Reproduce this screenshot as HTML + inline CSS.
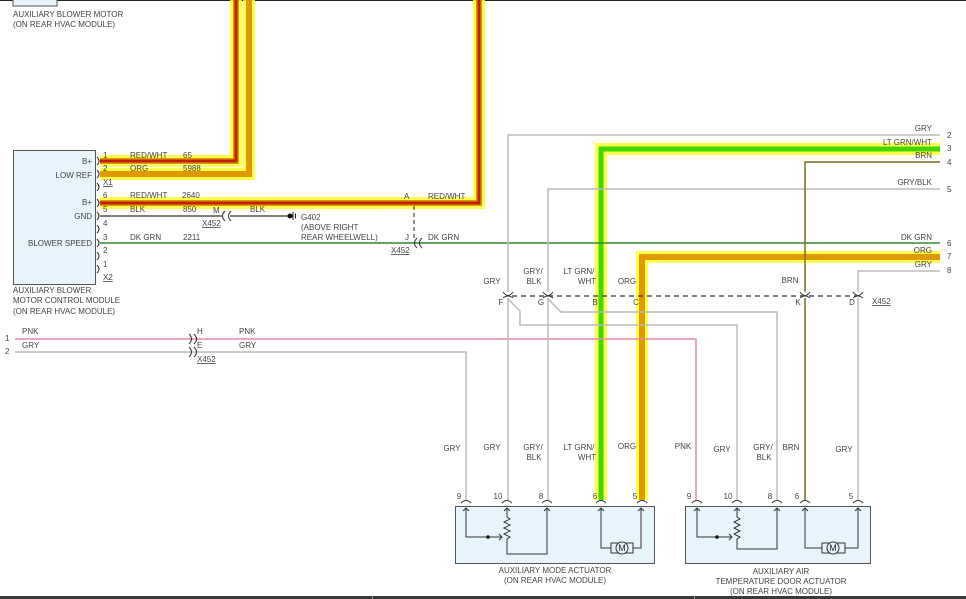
<!DOCTYPE html>
<html><head><meta charset="utf-8"><style>
html,body{margin:0;padding:0;background:#fff;}
svg{display:block;font-family:"Liberation Sans",sans-serif;}
text{font-size:8px;fill:#444;}
</style></head><body>
<svg width="966" height="599" viewBox="0 0 966 599" xmlns="http://www.w3.org/2000/svg">
<rect width="966" height="599" fill="#fff"/>
<line x1="0" y1="0.5" x2="966" y2="0.5" stroke="#222" stroke-width="1"/>
<rect x="13" y="-2" width="44" height="8" fill="#e8f4fc" stroke="#555"/>
<text x="13" y="17">AUXILIARY BLOWER MOTOR</text>
<text x="13" y="27">(ON REAR HVAC MODULE)</text>

<g fill="none" stroke-linejoin="miter">
<g stroke="#ffff30" stroke-width="12" opacity="0.85">
<polyline points="100,161 236,161 236,0"/>
<polyline points="100,174 249,174 249,0"/>
<polyline points="100,203 479,203 479,0"/>
<polyline points="940,149 601,149 601,500"/>
<polyline points="940,257 642,257 642,500"/>
</g>
<g stroke="#e09a00" stroke-width="6">
<polyline points="100,161 236,161 236,0"/>
<polyline points="100,174 249,174 249,0"/>
<polyline points="100,203 479,203 479,0"/>
<polyline points="940,257 642,257 642,500"/>
</g>
<g stroke="#c02010" stroke-width="3">
<polyline points="100,161 236,161 236,0"/>
<polyline points="100,203 479,203 479,0"/>
</g>
<polyline points="940,149 601,149 601,500" stroke="#40d800" stroke-width="5"/>
<polyline points="100,216 222,216" stroke="#555" stroke-width="1.5"/>
<polyline points="230,216 288,216" stroke="#555" stroke-width="1.5"/>
<polyline points="100,243 940,243" stroke="#2e8b2e" stroke-width="1.5"/>
<line x1="414" y1="206" x2="414" y2="240" stroke="#222" stroke-dasharray="4,3"/>
<polyline points="15,339 696,339 696,500" stroke="#e88aa0" stroke-width="1.5"/>
<polyline points="15,352 466,352 466,500" stroke="#bbb" stroke-width="1.5"/>
<polyline points="940,135 508,135 508,500" stroke="#bbb" stroke-width="1.5"/>
<polyline points="940,189 548,189 548,500" stroke="#bbb" stroke-width="1.5"/>
<polyline points="940,271 858,271 858,500" stroke="#bbb" stroke-width="1.5"/>
<polyline points="940,162 805,162 805,500" stroke="#7a6a20" stroke-width="1.5"/>
<polyline points="508,299 520,311 520,325 737,325 737,500" stroke="#bbb" stroke-width="1.5"/>
<polyline points="548,299 561,312 777,312 777,500" stroke="#bbb" stroke-width="1.5"/>
<line x1="512" y1="296" x2="862" y2="296" stroke="#333" stroke-dasharray="5,4" stroke-width="1.2"/>
</g>
<g fill="#fff" stroke="#333" stroke-width="1">
<path d="M503,292 q5,7 10,0 M503,298 q5,-4 10,0"/>
<path d="M543,292 q5,7 10,0 M543,298 q5,-4 10,0"/>
<path d="M800,292 q5,7 10,0 M800,298 q5,-4 10,0"/>
<path d="M853,292 q5,7 10,0 M853,298 q5,-4 10,0"/>
</g>
<g fill="none" stroke="#333" stroke-width="1">
<path d="M225,211 q-5,5 0,10 M231,211 q-5,5 0,10"/>
<path d="M189,334 q5,5 0,10 M194,334 q5,5 0,10 M189,347 q5,5 0,10 M194,347 q5,5 0,10"/>
<path d="M417,238 q-5,5 0,10 M422,238 q-5,5 0,10"/>
<path d="M97,157 q4,4 0,8 M97,170 q4,4 0,8 M97,183 q4,4 0,8 M97,199 q4,4 0,8 M97,212 q4,4 0,8 M97,225 q4,4 0,8 M97,239 q4,4 0,8 M97,252 q4,4 0,8 M97,265 q4,4 0,8"/>
</g>
<circle cx="290" cy="216" r="2.5" fill="#111"/>
<line x1="293" y1="212" x2="293" y2="220" stroke="#111"/><line x1="295.5" y1="213.5" x2="295.5" y2="218.5" stroke="#111"/>

<rect x="13.5" y="150.5" width="82" height="134" fill="#e8f4fc" stroke="#555"/>
<g text-anchor="end">
<text x="92" y="164">B+</text><text x="92" y="178">LOW REF</text>
<text x="92" y="205">B+</text><text x="92" y="219">GND</text><text x="92" y="246">BLOWER SPEED</text>
</g>
<text x="13" y="293">AUXILIARY BLOWER</text>
<text x="13" y="303">MOTOR CONTROL MODULE</text>
<text x="13" y="314">(ON REAR HVAC MODULE)</text>
<g>
<text x="103" y="158">1</text><text x="130" y="158">RED/WHT</text><text x="183" y="158">65</text>
<text x="103" y="171">2</text><text x="130" y="171">ORG</text><text x="183" y="171">5988</text>
<text x="103" y="185" text-decoration="underline">X1</text>
<text x="103" y="198">6</text><text x="130" y="198">RED/WHT</text><text x="182" y="198">2640</text>
<text x="103" y="212">5</text><text x="130" y="212">BLK</text><text x="183" y="212">850</text>
<text x="103" y="226">4</text>
<text x="103" y="240">3</text><text x="130" y="240">DK GRN</text><text x="183" y="240">2211</text>
<text x="103" y="253">2</text><text x="103" y="267">1</text>
<text x="103" y="280" text-decoration="underline">X2</text>
<text x="213" y="213">M</text><text x="202" y="226" text-decoration="underline">X452</text>
<text x="250" y="212">BLK</text>
<text x="301" y="220">G402</text><text x="301" y="230">(ABOVE RIGHT</text><text x="301" y="240">REAR WHEELWELL)</text>
<text x="404" y="199">A</text><text x="428" y="199">RED/WHT</text>
<text x="405" y="240">J</text><text x="428" y="240">DK GRN</text>
<text x="391" y="253" text-decoration="underline">X452</text>
<text x="5" y="341">1</text><text x="5" y="354">2</text>
<text x="22" y="334">PNK</text><text x="22" y="348">GRY</text>
<text x="197" y="334">H</text><text x="197" y="348">E</text>
<text x="239" y="334">PNK</text><text x="239" y="348">GRY</text>
<text x="197" y="362" text-decoration="underline">X452</text>
</g>
<g text-anchor="end">
<text x="932" y="131">GRY</text><text x="932" y="145">LT GRN/WHT</text><text x="932" y="158">BRN</text>
<text x="932" y="185">GRY/BLK</text><text x="932" y="240">DK GRN</text><text x="932" y="253">ORG</text><text x="932" y="267">GRY</text>
</g>
<g><text x="947" y="138">2</text><text x="947" y="151">3</text><text x="947" y="165">4</text><text x="947" y="192">5</text>
<text x="947" y="246">6</text><text x="947" y="259">7</text><text x="947" y="273">8</text></g>
<g text-anchor="middle">
<text x="492" y="284">GRY</text><text x="533" y="274">GRY/</text><text x="534" y="284">BLK</text>
<text x="579" y="274">LT GRN/</text><text x="587" y="284">WHT</text><text x="627" y="284">ORG</text>
<text x="790" y="283">BRN</text>
<text x="501" y="305">F</text><text x="541" y="305">G</text><text x="595" y="305">B</text><text x="636" y="305">C</text><text x="798" y="305">K</text><text x="852" y="305">D</text>
</g>
<text x="872" y="304" text-decoration="underline">X452</text>
<g text-anchor="middle">
<text x="452" y="451">GRY</text><text x="492" y="450">GRY</text><text x="533" y="450">GRY/</text><text x="534" y="460">BLK</text>
<text x="579" y="450">LT GRN/</text><text x="587" y="460">WHT</text><text x="627" y="449">ORG</text>
<text x="683" y="449">PNK</text><text x="722" y="452">GRY</text><text x="763" y="450">GRY/</text><text x="764" y="460">BLK</text>
<text x="791" y="450">BRN</text><text x="844" y="452">GRY</text>
<text x="459" y="499">9</text><text x="498" y="499">10</text><text x="541" y="499">8</text><text x="595" y="499">6</text><text x="635" y="499">5</text>
<text x="689" y="499">9</text><text x="728" y="499">10</text><text x="770" y="499">8</text><text x="797" y="499">6</text><text x="851" y="499">5</text>
</g>
<rect x="455.5" y="506.5" width="199" height="57" fill="#e8f4fc" stroke="#555"/>
<rect x="685.5" y="506.5" width="185" height="57" fill="#e8f4fc" stroke="#555"/>
<g fill="none" stroke="#333" stroke-width="1">
<path d="M461,503 q5,-5 10,0 M502,503 q5,-5 10,0 M542,503 q5,-5 10,0 M596,503 q5,-5 10,0 M637,503 q5,-5 10,0"/>
<path d="M692,503 q5,-5 10,0 M732,503 q5,-5 10,0 M772,503 q5,-5 10,0 M800,503 q5,-5 10,0 M853,503 q5,-5 10,0"/>
<path d="M463,511 l3,-3 l3,3 M466,508 V537 H502 M499,534 l3,3 l-3,3 M504,511 l3,-3 l3,3 M507,508 V517 l3,2 l-6,3 l6,3 l-6,3 l6,3 l-6,3 l6,3 l-3,2 V554 H547 V508 M544,511 l3,-3 l3,3"/>
<path d="M598,511 l3,-3 l3,3 M601,508 V548 H611 M633,548 H641 V508 M638,511 l3,-3 l3,3"/>
<rect x="611" y="543" width="22" height="10"/>
<path d="M694,511 l3,-3 l3,3 M697,508 V537 H732 M729,534 l3,3 l-3,3 M734,511 l3,-3 l3,3 M737,508 V517 l3,2 l-6,3 l6,3 l-6,3 l6,3 l-6,3 l6,3 l-3,2 V549 H777 V508 M774,511 l3,-3 l3,3"/>
<path d="M802,511 l3,-3 l3,3 M805,508 V548 H822 M845,548 H858 V508 M855,511 l3,-3 l3,3"/>
<rect x="822" y="543" width="23" height="10"/>
</g>
<circle cx="622" cy="548" r="6" fill="#e8f4fc" stroke="#333"/><text x="622" y="551" text-anchor="middle" style="font-size:9px;fill:#222">M</text>
<circle cx="833" cy="548" r="6" fill="#e8f4fc" stroke="#333"/><text x="833" y="551" text-anchor="middle" style="font-size:9px;fill:#222">M</text>
<circle cx="488" cy="537" r="1.8" fill="#111"/><circle cx="717" cy="537" r="1.8" fill="#111"/>
<g text-anchor="middle">
<text x="555" y="573">AUXILIARY MODE ACTUATOR</text><text x="555" y="583">(ON REAR HVAC MODULE)</text>
<text x="781" y="574">AUXILIARY AIR</text><text x="781" y="584">TEMPERATURE DOOR ACTUATOR</text><text x="781" y="594">(ON REAR HVAC MODULE)</text>
</g>
<rect x="0" y="596" width="966" height="3" fill="#3a3a3a"/>
<rect x="372" y="596" width="1" height="3" fill="#999"/><rect x="694" y="596" width="1" height="3" fill="#999"/>
</svg>
</body></html>
